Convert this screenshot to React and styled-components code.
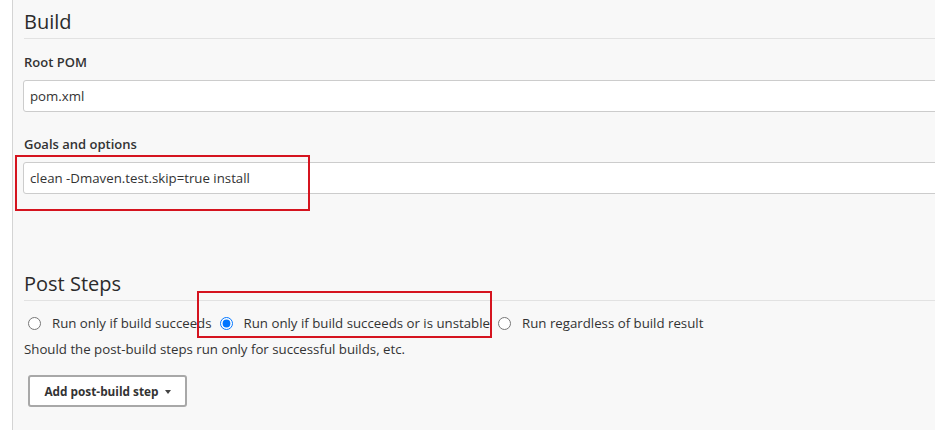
import React from "react";
import styled, { createGlobalStyle } from "styled-components";

const Global = createGlobalStyle`
  html, body { margin: 0; padding: 0; background: #ffffff; }
  body { font-family: "Open Sans", "Noto Sans", "Liberation Sans", sans-serif; color: #333; }
`;

const Page = styled.div`
  display: flex;
  width: 935px;
  height: 430px;
  overflow: hidden;
  background: #ffffff;
`;

const Gutter = styled.div`
  width: 12px;
  flex: none;
  background: #ffffff;
  border-right: 1px solid #d4d4d4;
`;

const Content = styled.div`
  flex: 1;
  min-width: 0;
  background: #f8f8f8;
  padding-left: 11px;
  overflow: hidden;
`;

const SectionHeading = styled.h2`
  margin: ${(p) => p.$top || 0}px 0 0 0;
  padding: 10px 0 4px 0;
  font-size: 20px;
  line-height: 24px;
  font-weight: 400;
  color: #2b2b2b;
  border-bottom: 1px solid #e2e2e2;
`;

const Label = styled.div`
  margin-top: ${(p) => p.$top}px;
  font-size: 13px;
  line-height: 18px;
  font-weight: 600;
  color: #333;
`;

const Field = styled.div`
  position: relative;
  margin-top: 9px;
`;

const TextInput = styled.input`
  display: block;
  box-sizing: border-box;
  width: calc(100% + 20px);
  height: 32px;
  margin: 0 0 0 -1px;
  padding: 0 6px;
  border: 1px solid #cccccc;
  border-radius: 3px;
  background: #ffffff;
  font-family: inherit;
  font-size: 13.25px;
  color: #333;
  outline: none;
`;

const Annotation = styled.div`
  position: absolute;
  left: ${(p) => p.$left}px;
  top: ${(p) => p.$top}px;
  width: ${(p) => p.$w}px;
  height: ${(p) => p.$h}px;
  border: 2px solid #d5141f;
  box-sizing: border-box;
  pointer-events: none;
`;

const RadioRow = styled.div`
  position: relative;
  display: flex;
  align-items: center;
  margin-top: 12px;
  height: 20px;
  padding-left: 4px;
`;

const RadioOption = styled.label`
  display: flex;
  align-items: center;
  font-size: 13.25px;
  line-height: 18px;
  color: #333;
  white-space: nowrap;
  margin-right: 8px;
`;

const Radio = styled.input`
  width: 13px;
  height: 13px;
  margin: 0 11px 0 0;
  accent-color: #0075ff;
`;

const Help = styled.div`
  margin-top: 7px;
  font-size: 13.25px;
  line-height: 18px;
  color: #333;
`;

const Button = styled.button`
  display: flex;
  align-items: center;
  gap: 6px;
  margin: 17px 0 0 4px;
  box-sizing: border-box;
  width: 159px;
  height: 32px;
  justify-content: center;
  background: #ffffff;
  border: 2px solid #a8a8a8;
  border-radius: 3px;
  font-family: inherit;
  font-size: 11.8px;
  font-weight: 700;
  color: #333;
  padding: 0;
`;

const Caret = styled.span`
  width: 0;
  height: 0;
  border-left: 3.5px solid transparent;
  border-right: 3.5px solid transparent;
  border-top: 4px solid #444;
  margin-top: 1px;
`;

export default function App() {
  return (
    <>
      <Global />
      <Page>
        <Gutter />
        <Content>
          <SectionHeading>Build</SectionHeading>
          <Label $top={14}>Root POM</Label>
          <Field>
            <TextInput defaultValue="pom.xml" />
          </Field>
          <Label $top={23}>Goals and options</Label>
          <Field>
            <TextInput defaultValue="clean -Dmaven.test.skip=true install" />
            <Annotation $left={-9} $top={-7} $w={295} $h={56} />
          </Field>
          <SectionHeading $top={68}>Post Steps</SectionHeading>
          <RadioRow>
            <RadioOption>
              <Radio type="radio" name="post" />
              Run only if build succeeds
            </RadioOption>
            <RadioOption>
              <Radio type="radio" name="post" defaultChecked />
              Run only if build succeeds or is unstable
            </RadioOption>
            <RadioOption>
              <Radio type="radio" name="post" />
              Run regardless of build result
            </RadioOption>
            <Annotation $left={173} $top={-22} $w={295} $h={47} />
          </RadioRow>
          <Help>Should the post-build steps run only for successful builds, etc.</Help>
          <Button type="button">
            Add post-build step
            <Caret />
          </Button>
        </Content>
      </Page>
    </>
  );
}
